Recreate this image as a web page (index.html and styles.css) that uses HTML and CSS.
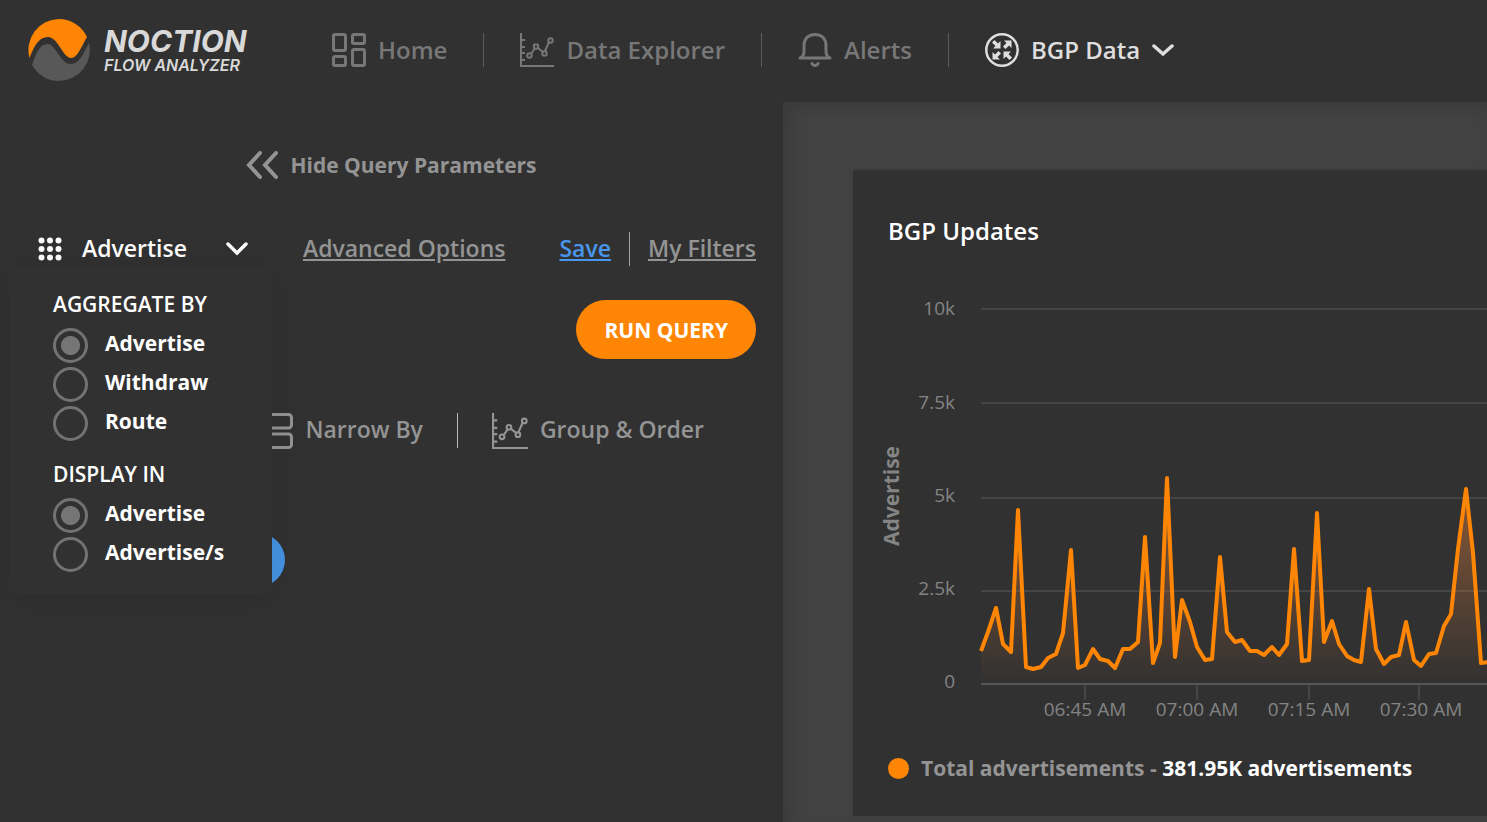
FILE: index.html
```html
<!DOCTYPE html>
<html lang="en">
  <head>
    <meta charset="UTF-8" />
    <meta name="viewport" content="width=device-width, initial-scale=1.0" />
    <title>Noction Flow Analyzer</title>
    <link rel="stylesheet" href="styles.css">
  </head>
  <body>
    <header class="header">
      <a href="#" class="logo">
        <svg width="62" height="62" viewBox="0 0 62 62">
          <path fill="#ff8504" d="M1.5 39A31 31 0 0 1 31 0A31 31 0 0 1 59 18C54 26 50 39 43 39 35 39 30 18 20 18 11 18 6 27 1.5 39z" />
          <path fill="#585858" d="M4 46C8 34 12 25 19.5 25 28 25 32 45 43 45c9 0 13-12 18-21A31 31 0 0 1 31 62A31 31 0 0 1 4 46z" />
        </svg>
        <span class="logo-text">
          <span class="logo-name">NOCTION</span>
          <span class="logo-sub">FLOW ANALYZER</span>
        </span>
      </a>
      <nav class="nav">
        <a href="#" class="nav-item">
          <svg width="34" height="34" viewBox="0 0 34 34" fill="none" stroke="currentColor" stroke-width="3">
            <rect x="1.5" y="1.5" width="12" height="16" rx="1.5" />
            <rect x="20.5" y="1.5" width="12" height="9" rx="1.5" />
            <rect x="1.5" y="23.5" width="12" height="9" rx="1.5" />
            <rect x="20.5" y="16.5" width="12" height="16" rx="1.5" />
          </svg>
          <span class="label">Home</span>
        </a>
        <a href="#" class="nav-item">
          <svg width="34" height="34" viewBox="0 0 34 34" fill="none" stroke="currentColor" stroke-width="2">
            <path d="M1 0v33h33M2 7h3M2 14h3M2 20h3M2 27h3M11 21l4-6M18 15l5 4M25 18l4-9" />
            <circle cx="9.5" cy="22.5" r="2.2" />
            <circle cx="16" cy="13.5" r="2.2" />
            <circle cx="24.5" cy="20.5" r="2.2" />
            <circle cx="30.5" cy="7.5" r="2.2" />
          </svg>
          <span class="label">Data Explorer</span>
        </a>
        <a href="#" class="nav-item">
          <svg width="34" height="34" viewBox="0 0 34 34" fill="none" stroke="currentColor" stroke-width="3" stroke-linecap="round">
            <path d="M2 25c3-1 4-3 4-7v-5C6 6 10 1.5 17 1.5S28 6 28 13v5c0 4 1 6 4 7z" stroke-linejoin="round" />
            <path d="M14 30.5c1 2.5 5 2.5 6 0" />
          </svg>
          <span class="label">Alerts</span>
        </a>
        <a href="#" class="nav-item active">
          <svg width="34" height="34" viewBox="0 0 34 34">
            <circle cx="17" cy="17" r="15.7" fill="none" stroke="currentColor" stroke-width="2.5" />
            <path d="M7 9.5L9.5 7l3.5 3.5 2.5-2.5v7.5H8l2.5-2.5zM26.5 7.5V15L24 12.5 20.5 16 18 13.5 21.5 10 19 7.5zM7.5 26.5V19l2.5 2.5L13.5 18l2.5 2.5-3.5 3.5 2.5 2.5zM27 24.5L24.5 27 21 23.5 18.5 26v-7.5H26L23.5 21z" fill="currentColor" />
          </svg>
          <span class="label">BGP Data</span>
          <svg width="22" height="14" viewBox="0 0 22 14" fill="none" stroke="currentColor" stroke-width="3.5" stroke-linecap="round">
            <path d="M2 3l9 8 9-8" />
          </svg>
        </a>
      </nav>
    </header>

    <div class="page">
      <aside class="panel">
        <button type="button" class="hide-btn">
          <svg width="32" height="28" viewBox="0 0 32 28" fill="none" stroke="currentColor" stroke-width="4" stroke-linecap="round">
            <path d="M14 2L3 14l11 12M30 2L19 14l11 12" />
          </svg>
          <span>Hide Query Parameters</span>
        </button>

        <div class="toolbar">
          <div class="dropdown">
            <button type="button" class="dropdown-btn">
              <svg width="24" height="24" viewBox="0 0 24 24" fill="currentColor">
                <circle cx="3.5" cy="3.5" r="3" /><circle cx="12" cy="3.5" r="3" /><circle cx="20.5" cy="3.5" r="3" />
                <circle cx="3.5" cy="12" r="3" /><circle cx="12" cy="12" r="3" /><circle cx="20.5" cy="12" r="3" />
                <circle cx="3.5" cy="20.5" r="3" /><circle cx="12" cy="20.5" r="3" /><circle cx="20.5" cy="20.5" r="3" />
              </svg>
              <span class="label">Advertise</span>
              <svg class="arrow" width="24" height="14" viewBox="0 0 24 14" fill="none" stroke="currentColor" stroke-width="3.5" stroke-linecap="round">
                <path d="M3 2l9 9 9-9" />
              </svg>
            </button>
            <div class="menu">
              <fieldset class="group">
                <legend>AGGREGATE BY</legend>
                <label class="option"><input type="radio" name="aggregate" checked><span>Advertise</span></label>
                <label class="option"><input type="radio" name="aggregate"><span>Withdraw</span></label>
                <label class="option"><input type="radio" name="aggregate"><span>Route</span></label>
              </fieldset>
              <fieldset class="group">
                <legend>DISPLAY IN</legend>
                <label class="option"><input type="radio" name="display" checked><span>Advertise</span></label>
                <label class="option"><input type="radio" name="display"><span>Advertise/s</span></label>
              </fieldset>
            </div>
          </div>
          <a href="#" class="link">Advanced Options</a>
          <div class="filters">
            <a href="#" class="link save">Save</a>
            <a href="#" class="link">My Filters</a>
          </div>
        </div>

        <button type="button" class="run-btn"><span class="label">RUN QUERY</span></button>

        <div class="tabs">
          <a href="#" class="tab">
            <svg width="36" height="36" viewBox="0 0 36 36" fill="none" stroke="currentColor" stroke-width="3">
              <rect x="1.5" y="1.5" width="33" height="13.5" rx="3" />
              <rect x="1.5" y="21" width="33" height="13.5" rx="3" />
            </svg>
            <span class="label">Narrow By</span>
          </a>
          <a href="#" class="tab">
            <svg width="36" height="36" viewBox="0 0 34 34" fill="none" stroke="currentColor" stroke-width="2">
              <path d="M1 0v33h33M2 7h3M2 14h3M2 20h3M2 27h3M11 21l4-6M18 15l5 4M25 18l4-9" />
              <circle cx="9.5" cy="22.5" r="2.2" />
              <circle cx="16" cy="13.5" r="2.2" />
              <circle cx="24.5" cy="20.5" r="2.2" />
              <circle cx="30.5" cy="7.5" r="2.2" />
            </svg>
            <span class="label">Group &amp; Order</span>
          </a>
        </div>

        <button type="button" class="add-btn" aria-label="Add filter"></button>
      </aside>

      <main class="content">
        <section class="card">
          <h2 class="card-title">BGP Updates</h2>
          <svg class="chart" width="100%" height="490">
            <defs>
              <linearGradient id="fill" gradientUnits="userSpaceOnUse" x1="0" y1="230" x2="0" y2="436">
                <stop offset="0" stop-color="#ff8c3c" stop-opacity="0.45" />
                <stop offset="1" stop-color="#ff8c3c" stop-opacity="0" />
              </linearGradient>
            </defs>
            <g class="grid">
              <line x1="128" y1="61" x2="100%" y2="61" />
              <line x1="128" y1="155" x2="100%" y2="155" />
              <line x1="128" y1="250" x2="100%" y2="250" />
              <line x1="128" y1="343" x2="100%" y2="343" />
            </g>
            <path fill="url(#fill)" d="M128 436V403L135 384 143 360 150 396 158 404 165 262 173 419 180 421 188 419 195 410 203 406 210 385 218 302 225 420 232 417 240 401 247 411 255 413 262 420 270 401 277 401 285 394 292 289 300 415 307 395 314 230 322 409 329 352 337 374 344 399 352 412 359 411 367 309 374 384 382 394 389 392 397 403 404 403 411 407 419 399 426 407 434 396 441 301 449 413 456 412 464 265 471 394 479 373 486 396 494 408 501 412 508 414 516 341 523 401 531 416 538 409 546 407 553 374 561 412 568 418 576 406 583 405 591 378 598 366 605 301 613 241 620 305 628 415 636 414V436z" />
            <polyline class="series" points="128,403 135,384 143,360 150,396 158,404 165,262 173,419 180,421 188,419 195,410 203,406 210,385 218,302 225,420 232,417 240,401 247,411 255,413 262,420 270,401 277,401 285,394 292,289 300,415 307,395 314,230 322,409 329,352 337,374 344,399 352,412 359,411 367,309 374,384 382,394 389,392 397,403 404,403 411,407 419,399 426,407 434,396 441,301 449,413 456,412 464,265 471,394 479,373 486,396 494,408 501,412 508,414 516,341 523,401 531,416 538,409 546,407 553,374 561,412 568,418 576,406 583,405 591,378 598,366 605,301 613,241 620,305 628,415 636,414" />
            <g class="axis">
              <line x1="128" y1="436" x2="100%" y2="436" />
              <path class="ticks" d="M232 437v15M344 437v15M456 437v15M566 437v15" />
            </g>
            <g class="labels y-labels">
              <text x="102" y="67">10k</text>
              <text x="102" y="161">7.5k</text>
              <text x="102" y="254">5k</text>
              <text x="102" y="347">2.5k</text>
              <text x="102" y="440">0</text>
            </g>
            <g class="labels x-labels">
              <text x="232" y="468">06:45 AM</text>
              <text x="344" y="468">07:00 AM</text>
              <text x="456" y="468">07:15 AM</text>
              <text x="568" y="468">07:30 AM</text>
            </g>
            <text class="axis-title" transform="translate(46 248) rotate(-90)">Advertise</text>
          </svg>
          <p class="legend">
            <span class="dot"></span>
            <span>Total advertisements - <b>381.95K advertisements</b></span>
          </p>
        </section>
      </main>
    </div>
  </body>
</html>
```
FILE: styles.css
```css
* {
  box-sizing: border-box;
}

body {
  margin: 0;
  min-height: 100vh;
  display: flex;
  flex-direction: column;
  background: #313131;
  color: #fff;
  font-family: "Open Sans", sans-serif;
  font-size: 23px;
  font-weight: 600;
  overflow: hidden;
}

a {
  color: inherit;
  text-decoration: none;
}

button {
  padding: 0;
  border: none;
  background: none;
  color: inherit;
  font: inherit;
  cursor: pointer;
}

svg {
  flex-shrink: 0;
}

.label {
  padding-bottom: 2px;
}

/* Header */
.header {
  display: flex;
  align-items: center;
  height: 102px;
  padding: 0 28px 2px;
}

.logo {
  display: flex;
  align-items: center;
  gap: 14px;
  width: 304px;
  color: #d9d9d9;
  font-family: Inter, sans-serif;
  font-style: italic;
}

.logo-text {
  display: flex;
  flex-direction: column;
  padding-top: 2px;
}

.logo-name {
  font-size: 30px;
  font-weight: 700;
  line-height: 28px;
}

.logo-sub {
  font-size: 16px;
  font-weight: 600;
  line-height: 20px;
}

.nav {
  display: flex;
  color: #777;
  font-size: 24px;
}

.nav-item {
  display: flex;
  align-items: center;
  gap: 12px;
  height: 34px;
  padding-right: 36px;
  white-space: nowrap;
}

.nav-item + .nav-item {
  padding-left: 36px;
  border-left: 1px solid #5c5c5c;
}

.nav-item.active {
  color: #dedede;
}

/* Page */
.page {
  flex: 1;
  display: grid;
  grid-template-columns: 783px 1fr;
}

.panel {
  display: flex;
  flex-direction: column;
  padding: 46px 27px 0;
  color: #949494;
}

.hide-btn {
  display: flex;
  align-items: center;
  align-self: center;
  gap: 12px;
  height: 34px;
  font-size: 21px;
  font-weight: 700;
}

.toolbar {
  display: flex;
  align-items: center;
  justify-content: space-between;
  height: 34px;
  margin-top: 50px;
  padding-left: 11px;
}

.dropdown {
  position: relative;
}

.dropdown-btn {
  display: flex;
  align-items: center;
  gap: 20px;
  height: 34px;
  color: #fff;
}

.arrow {
  margin-left: 18px;
}

.menu {
  position: absolute;
  top: 34px;
  left: -29px;
  width: 263px;
  padding: 23px 44px 20px;
  border-radius: 4px;
  background: #313131;
  box-shadow: 0 4px 40px rgba(0, 0, 0, 0.1);
  color: #fff;
  font-size: 21px;
}

.group {
  margin: 0;
  padding: 0;
  border: none;
}

.group + .group {
  margin-top: 16px;
}

.group legend {
  margin-bottom: 7px;
  padding: 0;
  font-weight: 600;
  line-height: 30px;
  white-space: nowrap;
}

.option {
  display: flex;
  align-items: center;
  gap: 17px;
  height: 39px;
  font-weight: 700;
  white-space: nowrap;
}

.option span {
  padding-bottom: 6px;
}

.option input {
  appearance: none;
  flex-shrink: 0;
  width: 35px;
  height: 35px;
  margin: 0;
  border: 3px solid #727272;
  border-radius: 50%;
}

.option input:checked {
  background: radial-gradient(#757575 9px, transparent 10px);
}

.link {
  height: 34px;
  line-height: 32px;
  text-decoration: underline;
}

.filters {
  display: flex;
}

.save {
  margin-right: 18px;
  padding-right: 18px;
  border-right: 1px solid #a0a0a0;
  color: #4897ec;
}

.run-btn {
  align-self: flex-end;
  height: 59px;
  margin-top: 34px;
  padding: 0 28px;
  border-radius: 30px;
  background: #ff8504;
  color: #fff;
  font-size: 21px;
  font-weight: 700;
}

.tabs {
  display: flex;
  justify-content: flex-end;
  margin-top: 54px;
  padding-right: 52px;
}

.tab {
  display: flex;
  align-items: center;
  gap: 12px;
  height: 35px;
}

.tab .label {
  padding-bottom: 4px;
}

.tab + .tab {
  margin-left: 34px;
  padding-left: 34px;
  border-left: 1px solid #b8b8b8;
}

.add-btn {
  width: 247px;
  height: 54px;
  margin: 85px 0 0 11px;
  border-radius: 27px;
  background: #4694e4;
}

/* Chart */
.content {
  min-width: 0;
  padding: 68px 0 6px 70px;
  background: #424242;
  box-shadow: inset 6px 6px 16px rgba(0, 0, 0, 0.12);
}

.card {
  background: #313131;
  box-shadow: 0 0 4px rgba(0, 0, 0, 0.1);
}

.card-title {
  margin: 0;
  padding: 44px 35px 0;
  font-size: 24px;
  font-weight: 600;
  line-height: 34px;
}

.chart {
  display: block;
}

.grid line {
  stroke: #454545;
  stroke-width: 2;
}

.axis line {
  stroke: #565656;
  stroke-width: 2;
}

.ticks {
  stroke: #454545;
  stroke-width: 2;
}

.series {
  fill: none;
  stroke: #ff8504;
  stroke-width: 4;
  stroke-linejoin: round;
}

.labels {
  fill: #848484;
  font-size: 19px;
  font-weight: 400;
}

.y-labels {
  text-anchor: end;
}

.x-labels {
  text-anchor: middle;
}

.axis-title {
  fill: #848484;
  font-size: 21px;
  font-weight: 700;
  text-anchor: middle;
}

.legend {
  display: flex;
  align-items: center;
  gap: 12px;
  margin: 0;
  padding: 13px 35px 31px;
  color: #949494;
  font-size: 21px;
  font-weight: 700;
  line-height: 34px;
  white-space: nowrap;
}

.legend b {
  color: #fff;
  font-weight: 700;
}

.dot {
  width: 21px;
  height: 21px;
  border-radius: 50%;
  background: #ff8504;
}
```
